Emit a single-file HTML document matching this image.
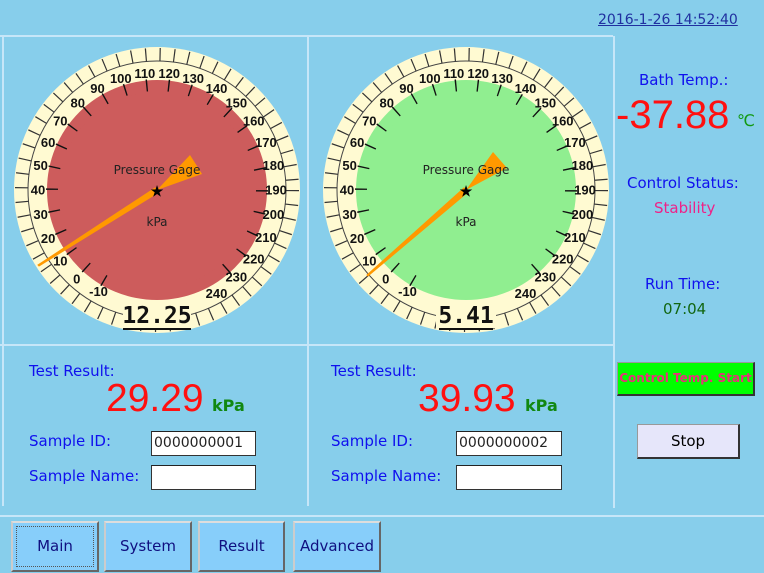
<!DOCTYPE html>
<html><head><meta charset="utf-8"><style>
*{margin:0;padding:0;box-sizing:border-box}
body{width:764px;height:573px;background:#87CEEB;position:relative;overflow:hidden;font-family:"DejaVu Sans","Liberation Sans",sans-serif}
.a{position:absolute;white-space:nowrap}
.ln{position:absolute;background:#c6e6f8}
.blue{color:#1010ee;font-size:15px}
.box{position:absolute;background:#fff;border:1px solid #333;border-top-color:#222;font-size:14px;padding:2px 2px;line-height:18px;color:#222}
.btn{position:absolute;top:521px;height:51px;background:#87CEFA;border:2px solid #666;border-top-color:#ddd;border-left-color:#ccc;color:#101080;font-size:15px;text-align:center;line-height:47px}
</style></head><body>
<div class="a" style="left:598px;top:12px;font-size:14px;color:#2030a0;text-decoration:underline">2016-1-26 14:52:40</div>
<div class="ln" style="left:0;top:35px;width:613px;height:2px"></div>
<div class="ln" style="left:2px;top:36px;width:2px;height:470px"></div>
<div class="ln" style="left:307px;top:36px;width:2px;height:470px"></div>
<div class="ln" style="left:613px;top:36px;width:2px;height:472px"></div>
<div class="ln" style="left:0;top:344px;width:613px;height:2px"></div>
<div class="ln" style="left:0;top:515px;width:764px;height:2px"></div>

<svg class="a" style="left:0;top:0" width="764" height="573">
<defs>
<g id="rim">
<circle r="143" fill="#FFFAD2"/>
<circle r="129" fill="none" stroke="#444" stroke-width="1"/>
<circle r="135.5" fill="none" stroke="#333" stroke-width="13" stroke-dasharray="1.2 13.04"/>
</g>
</defs>
<g font-family="Liberation Sans, sans-serif" font-size="13" font-weight="bold" text-anchor="middle" dominant-baseline="central" fill="#111">
<g transform="translate(157,190)">
<use href="#rim"/>
<circle r="110" fill="#CD5C5C"/>
<path d="M-52.5 90.9 A105 105 0 1 1 52.5 90.9" fill="none" stroke="#111" stroke-width="12" stroke-dasharray="1.4 20.59"/>
<circle r="98" fill="#CD5C5C"/>
<g>
<text x="-58.5" y="101.3">-10</text><text x="-80.3" y="88.9">0</text><text x="-96.7" y="70.8">10</text><text x="-108.9" y="48.6">20</text><text x="-116.4" y="24.3">30</text><text x="-119" y="0">40</text><text x="-116.4" y="-24.3">50</text><text x="-108.9" y="-47.6">60</text><text x="-96.7" y="-68.8">70</text><text x="-79.3" y="-86.9">80</text><text x="-59.5" y="-101.3">90</text><text x="-36.2" y="-111.3">100</text><text x="-12.2" y="-116.4">110</text><text x="12.2" y="-116.4">120</text><text x="36.2" y="-111.3">130</text><text x="59.5" y="-101.3">140</text><text x="79.3" y="-86.9">150</text><text x="96.7" y="-68.8">160</text><text x="108.9" y="-47.6">170</text><text x="116.4" y="-24.3">180</text><text x="119" y="0">190</text><text x="116.4" y="24.3">200</text><text x="108.9" y="47.6">210</text><text x="96.7" y="68.8">220</text><text x="79.3" y="86.9">230</text><text x="59.5" y="103.3">240</text>
</g>
<polygon points="0,0 33,-35 45,-16" fill="#FF9900"/>
<polygon points="-2,-2 2,2 -118,76 -119,75" fill="#FF9900" stroke="#FF9900" stroke-width="1"/>
<text y="-20" font-size="12" font-weight="normal" font-family="DejaVu Sans, sans-serif" fill="#222">Pressure Gage</text>
<text y="32" font-size="12" font-weight="normal" font-family="DejaVu Sans, sans-serif" fill="#222">kPa</text>
<text y="1" font-size="14" fill="#000">★</text>
<rect x="-34" y="110" width="68" height="28" fill="#FFFAD2"/>
<text y="126" font-family="DejaVu Sans Mono, monospace" font-weight="bold" font-size="23" fill="#111">12.25</text>
<rect x="-34" y="138" width="68" height="2" fill="#111"/>
</g>
<g transform="translate(466,190)">
<use href="#rim"/>
<circle r="110" fill="#90EE90"/>
<path d="M-52.5 90.9 A105 105 0 1 1 52.5 90.9" fill="none" stroke="#111" stroke-width="12" stroke-dasharray="1.4 20.59"/>
<circle r="98" fill="#90EE90"/>
<g>
<text x="-58.5" y="101.3">-10</text><text x="-80.3" y="88.9">0</text><text x="-96.7" y="70.8">10</text><text x="-108.9" y="48.6">20</text><text x="-116.4" y="24.3">30</text><text x="-119" y="0">40</text><text x="-116.4" y="-24.3">50</text><text x="-108.9" y="-47.6">60</text><text x="-96.7" y="-68.8">70</text><text x="-79.3" y="-86.9">80</text><text x="-59.5" y="-101.3">90</text><text x="-36.2" y="-111.3">100</text><text x="-12.2" y="-116.4">110</text><text x="12.2" y="-116.4">120</text><text x="36.2" y="-111.3">130</text><text x="59.5" y="-101.3">140</text><text x="79.3" y="-86.9">150</text><text x="96.7" y="-68.8">160</text><text x="108.9" y="-47.6">170</text><text x="116.4" y="-24.3">180</text><text x="119" y="0">190</text><text x="116.4" y="24.3">200</text><text x="108.9" y="47.6">210</text><text x="96.7" y="68.8">220</text><text x="79.3" y="86.9">230</text><text x="59.5" y="103.3">240</text>
</g>
<polygon points="0,0 27,-38 41,-22" fill="#FF9900"/>
<polygon points="-2,-2 2,2 -98,86 -99,85" fill="#FF9900" stroke="#FF9900" stroke-width="1"/>
<text y="-20" font-size="12" font-weight="normal" font-family="DejaVu Sans, sans-serif" fill="#222">Pressure Gage</text>
<text y="32" font-size="12" font-weight="normal" font-family="DejaVu Sans, sans-serif" fill="#222">kPa</text>
<text y="1" font-size="14" fill="#000">★</text>
<rect x="-30" y="110" width="60" height="28" fill="#FFFAD2"/>
<text y="126" font-family="DejaVu Sans Mono, monospace" font-weight="bold" font-size="23" fill="#111">5.41</text>
<rect x="-27" y="138" width="54" height="2" fill="#111"/>
</g>
</g>
</svg>

<div class="a blue" style="left:639px;top:71px">Bath Temp.:</div>
<div class="a" style="left:616px;top:93px;font-size:40px;color:#ff1010;font-family:'Liberation Sans',sans-serif">-37.88</div>
<div class="a" style="left:737px;top:111px;font-size:16px;color:#119911">℃</div>
<div class="a blue" style="left:627px;top:174px">Control Status:</div>
<div class="a" style="left:654px;top:199px;font-size:15px;color:#ee2288">Stability</div>
<div class="a blue" style="left:645px;top:275px">Run Time:</div>
<div class="a" style="left:663px;top:300px;font-size:15px;color:#116611">07:04</div>
<div class="a" style="left:617px;top:362px;width:138px;height:34px;background:#00ff00;border:1px solid #999;border-right:2px solid #333;border-bottom:2px solid #333;color:#e8307a;font-size:12px;font-weight:bold;text-align:center;line-height:31px">Control Temp. Start</div>
<div class="a" style="left:637px;top:424px;width:103px;height:35px;background:#E6E6FA;border:1px solid #999;border-right:2px solid #333;border-bottom:2px solid #333;color:#000;font-size:15px;text-align:center;line-height:32px">Stop</div>

<div class="a blue" style="left:29px;top:362px">Test Result:</div>
<div class="a" style="left:106px;top:377px;font-size:39px;color:#ff1010;font-family:'Liberation Sans',sans-serif">29.29</div>
<div class="a" style="left:212px;top:396px;font-size:16px;font-weight:bold;color:#118811">kPa</div>
<div class="a blue" style="left:29px;top:432px">Sample ID:</div>
<div class="box" style="left:151px;top:431px;width:105px;height:25px">0000000001</div>
<div class="a blue" style="left:29px;top:467px">Sample Name:</div>
<div class="box" style="left:151px;top:465px;width:105px;height:25px"></div>

<div class="a blue" style="left:331px;top:362px">Test Result:</div>
<div class="a" style="left:418px;top:377px;font-size:39px;color:#ff1010;font-family:'Liberation Sans',sans-serif">39.93</div>
<div class="a" style="left:525px;top:396px;font-size:16px;font-weight:bold;color:#118811">kPa</div>
<div class="a blue" style="left:331px;top:432px">Sample ID:</div>
<div class="box" style="left:456px;top:431px;width:106px;height:25px">0000000002</div>
<div class="a blue" style="left:331px;top:467px">Sample Name:</div>
<div class="box" style="left:456px;top:465px;width:106px;height:25px"></div>

<div class="btn" style="left:11px;width:88px"><span style="position:absolute;left:3px;top:3px;right:3px;bottom:3px;border:1px dotted #555"></span>Main</div>
<div class="btn" style="left:104px;width:88px">System</div>
<div class="btn" style="left:198px;width:87px">Result</div>
<div class="btn" style="left:293px;width:88px">Advanced</div>
</body></html>
